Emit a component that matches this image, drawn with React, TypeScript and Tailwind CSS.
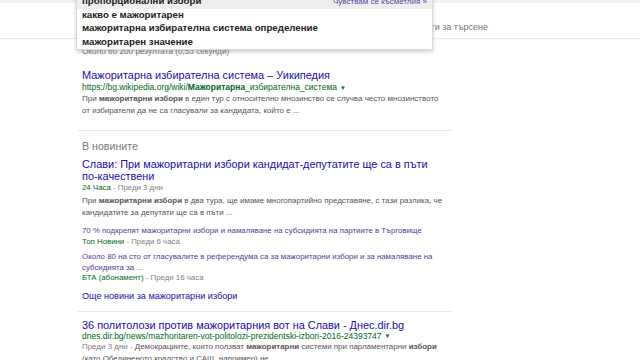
import React from "react";

const suggestions = [
	"пропорционални избори",
	"какво е мажоритарен",
	"мажоритарна избирателна система определение",
	"мажоритарен значение",
];

const Arrow = () => <span className="ml-[3px] text-[6px] align-middle">▼</span>;

const Suggestions = () => (
	<div className="absolute left-[76px] top-[-6px] w-[357px] bg-white border border-[#d9d9d9] shadow-[0_2px_4px_rgba(0,0,0,0.2)]">
		{suggestions.map((s, i) => (
			<div
				key={s}
				className={`flex items-center justify-between h-[13.5px] pl-[5px] pr-[5px] ${i === 0 ? "bg-[#eeeeee]" : ""}`}
			>
				<span className="text-[9.7px] font-bold text-[#222] whitespace-nowrap">{s}</span>
				{i === 0 && (
					<span className="text-[8px] text-[#5a4aa0] whitespace-nowrap">Чувствам се късметлия »</span>
				)}
			</div>
		))}
	</div>
);

export default function App() {
	return (
		<div
			className="relative w-[640px] h-[360px] overflow-hidden bg-white"
			style={{ fontFamily: '"Liberation Sans", Arial, sans-serif' }}
		>
			<div className="h-[3px] bg-[#f2f2f2]" />
			<div className="h-[36px] border-b border-[#ebebeb] pl-[385px] pt-[10px]">
				<span className="text-[9px] leading-[12px] text-[#777]">Инструменти за търсене</span>
			</div>

			<div className="ml-[78px] w-[374px]">
				<div className="pl-[4px] mt-[7px] text-[8.2px] leading-[12px] text-[#808080]">
					Около 60 200 резултата (0,53 секунди)
				</div>

				{/* result 1 */}
				<div className="pl-[4px] mt-[11px] whitespace-nowrap">
					<div className="text-[10.95px] leading-[13px] text-[#1a0dab]">
						Мажоритарна избирателна система – Уикипедия
					</div>
					<div className="text-[8.5px] leading-[10px] text-[#006621]">
						https://bg.wikipedia.org/wiki/<b>Мажоритарна</b>_избирателна_система
						<Arrow />
					</div>
					<div className="text-[8px] leading-[12px] text-[#545454]">
						<div>
							При <b className="text-[#555]">мажоритарни избори</b> в един тур с относително мнозинство се случва често мнозинството
						</div>
						<div>от избиратели да не са гласували за кандидата, който е ...</div>
					</div>
				</div>

				<div className="mt-[13px] h-px bg-[#e6e6e6]" />

				{/* news */}
				<div className="pl-[4px] mt-[8px] whitespace-nowrap">
					<div className="text-[10.65px] leading-[14px] text-[#777]">В новините</div>
					<div className="mt-[5px] text-[10.9px] leading-[12px] text-[#1a0dab]">
						<div>Слави: При мажоритарни избори кандидат-депутатите ще са в пъти</div>
						<div>по-качествени</div>
					</div>
					<div className="text-[7.85px] leading-[12px] text-[#808080]">
						<span className="text-[#006621]">24 Часа</span> - Преди 3 дни
					</div>
					<div className="mt-[1px] text-[7.95px] leading-[12px] text-[#545454]">
						<div>
							При <b className="text-[#555]">мажоритарни избори</b> в два тура, ще имаме многопартийно представяне, с тази разлика, че
						</div>
						<div>кандидатите за депутати ще са в пъти ...</div>
					</div>

					<div className="mt-[6px] text-[7.87px] leading-[12px] text-[#58399a]">
						70 % подкрепят мажоритарни избори и намаляване на субсидията на партиите в Търговище
					</div>
					<div className="text-[7.85px] leading-[10px] text-[#808080]">
						<span className="text-[#006621]">Топ Новини</span> - Преди 6 часа
					</div>

					<div className="mt-[4px] text-[7.9px] leading-[11px] text-[#58399a]">
						<div>Около 80 на сто от гласувалите в референдума са за мажоритарни избори и за намаляване на</div>
						<div>субсидията за ...</div>
					</div>
					<div className="text-[7.85px] leading-[10px] text-[#808080]">
						<span className="text-[#006621]">БТА (абонамент)</span> - Преди 16 часа
					</div>

					<div className="mt-[6px] text-[9.1px] leading-[14px] text-[#1a0dab]">
						Още новини за мажоритарни избори
					</div>
				</div>

				<div className="mt-[8px] h-px bg-[#e6e6e6]" />

				{/* result 2 */}
				<div className="pl-[4px] mt-[7px] whitespace-nowrap">
					<div className="text-[10.9px] leading-[13px] text-[#1a0dab]">
						36 политолози против мажоритарния вот на Слави - Днес.dir.bg
					</div>
					<div className="text-[8.5px] leading-[9px] text-[#006621]">
						dnes.dir.bg/news/mazhoritaren-vot-politolozi-prezidentski-izbori-2016-24393747
						<Arrow />
					</div>
					<div className="text-[7.95px] leading-[12px] text-[#545454]">
						<div>
							<span className="text-[#808080]">Преди 3 дни - </span>Демокрациите, които ползват{" "}
							<b className="text-[#555]">мажоритарни</b> системи при парламентарни <b className="text-[#555]">избори</b>
						</div>
						<div>(като Обединеното кралство и САЩ, например) не ...</div>
					</div>
				</div>
			</div>

			<Suggestions />
		</div>
	);
}
